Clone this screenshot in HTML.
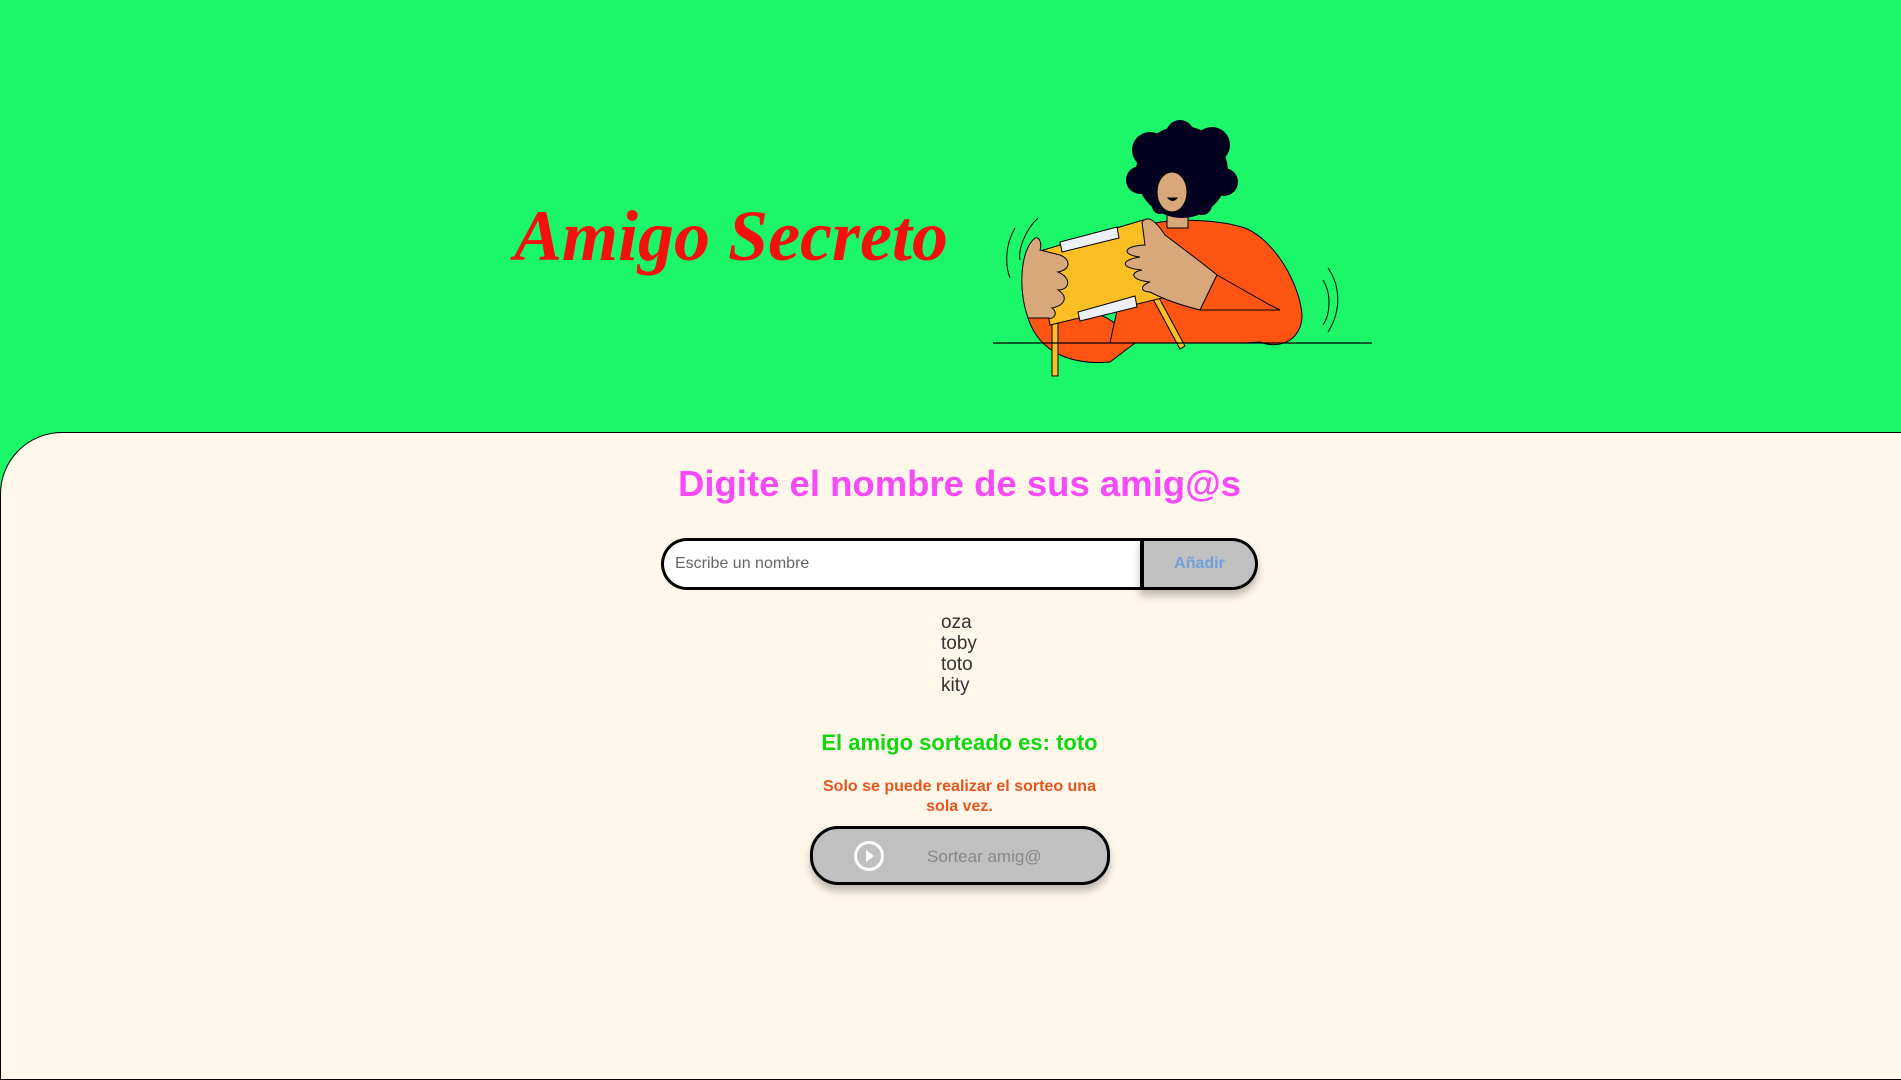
<!DOCTYPE html>
<html><head><meta charset="utf-8"><style>
html,body{margin:0;padding:0;width:1901px;height:1080px;overflow:hidden;background:#1cf76a;font-family:"Liberation Sans",sans-serif}
.title{position:absolute;left:514px;top:200px;font-family:"Liberation Serif",serif;font-weight:bold;font-style:italic;font-size:72px;color:#f50f0f;white-space:nowrap;line-height:1}
.main{position:absolute;left:0;top:432px;width:1960px;height:646px;background:#fff7ea;border:1px solid #000;border-radius:62px 62px 0 0}
h2{position:absolute;left:9px;width:1901px;top:461px;margin:0;text-align:center;font-size:36.5px;font-weight:bold;color:#f84af8;line-height:46px}
.inp{position:absolute;left:661px;top:538px;width:465px;height:46px;border:3px solid #000;border-right:none;border-radius:26px 0 0 26px;background:#fff;font-size:16px;color:#666;line-height:46px;padding-left:11px;box-sizing:content-box}
.add{position:absolute;left:1140px;top:538px;width:111px;height:46px;border:3px solid #000;border-left:4px solid #000;border-radius:0 26px 26px 0;background:#c0c0c0;font-weight:bold;font-size:16px;color:#6fa0da;text-align:center;line-height:46px;box-shadow:0 6px 8px rgba(0,0,0,.25)}
.list{position:absolute;left:941px;top:612px;font-size:19px;line-height:21px;color:#333}
.res{position:absolute;left:9px;width:1901px;top:730px;text-align:center;font-size:22px;font-weight:bold;color:#0fd80f}
.warn{position:absolute;left:822px;width:275px;top:777px;text-align:center;font-size:16px;font-weight:bold;color:#e8541e;line-height:20px}
.btn{position:absolute;left:810px;top:826px;width:294px;height:53px;border:3px solid #000;border-radius:28px;background:#c0c0c0;box-shadow:0 6px 8px rgba(0,0,0,.25)}
.btn span{position:absolute;left:114px;top:18px;font-size:17px;color:#888}
</style></head><body>
<div class="title">Amigo Secreto</div>
<svg style="position:absolute;left:980px;top:100px" width="400" height="290" viewBox="0 0 400 290">
<g stroke="#000" stroke-width="1">
<path d="M120 215 C140 222 148 240 155 243 L130 262 C95 265 60 255 48 218 Z" fill="#ff5512"/>
<path d="M175 123 C200 118 240 120 265 128 C295 140 320 185 322 215 C322 240 300 250 280 242 L265 243 L130 243 L150 150 Z" fill="#ff5512"/>
<rect x="187" y="100" width="21" height="28" fill="#d9a87a"/>
<g fill="#03001f" stroke="none">
<circle cx="202" cy="72" r="46"/><circle cx="170" cy="50" r="18"/><circle cx="200" cy="34" r="14"/><circle cx="232" cy="45" r="18"/><circle cx="160" cy="80" r="14"/><circle cx="244" cy="82" r="14"/><circle cx="222" cy="105" r="10"/><circle cx="180" cy="106" r="8"/>
</g>
<ellipse cx="192" cy="92" rx="15" ry="20" fill="#d9a87a"/>
<path d="M188 98 q5 5 9 0 z" fill="#000"/>
<rect x="72" y="222" width="6" height="54" fill="#fbbf24"/>
<path d="M178 196 L205 246 L200 249 L173 199 Z" fill="#fbbf24"/>
<path d="M57 152 L163 120 L182 198 L70 225 Z" fill="#fbbf24"/>
<path d="M80 142 L137 127 L139 138 L82 152 Z" fill="#eef0f8"/>
<path d="M98 212 L155 196 L157 207 L100 221 Z" fill="#eef0f8"/>
<path d="M48 218 C38 190 40 150 55 138 C60 136 62 145 60 150 L80 155 C92 160 90 170 78 172 C92 178 90 190 78 190 C88 196 86 205 72 208 C78 212 75 220 68 218 Z" fill="#d9a87a"/>
<path d="M162 122 C168 115 175 120 185 135 C205 150 225 165 237 175 L220 210 C200 205 185 200 170 192 C160 192 160 185 170 182 C150 180 150 172 162 170 C140 168 140 160 160 157 C142 155 142 146 165 145 Z" fill="#d9a87a"/>
<path d="M237 175 L290 205 L300 210 L220 210 Z" fill="#ff5512"/>
</g>
<path d="M13 243 L392 243" stroke="#000" stroke-width="1.2"/>
<g fill="none" stroke="#000" stroke-width="1">
<path d="M35 128 C25 145 25 165 30 178"/><path d="M58 118 C45 130 38 150 40 160"/>
<path d="M348 168 C360 185 362 210 348 232"/><path d="M343 180 C352 195 350 215 343 225"/>
</g>
</svg>
<div class="main"></div>
<h2>Digite el nombre de sus amig@s</h2>
<div class="inp">Escribe un nombre</div>
<div class="add">Añadir</div>
<div class="list">oza<br>toby<br>toto<br>kity</div>
<div class="res">El amigo sorteado es: toto</div>
<div class="warn">Solo se puede realizar el sorteo una sola vez.</div>
<div class="btn"><svg style="position:absolute;left:40px;top:11px" width="32" height="32" viewBox="0 0 32 32"><circle cx="16" cy="16" r="13.5" fill="none" stroke="#fff" stroke-width="3"/><path d="M13 10 L21 16 L13 22 Z" fill="#fff"/></svg><span>Sortear amig@</span></div>
</body></html>
